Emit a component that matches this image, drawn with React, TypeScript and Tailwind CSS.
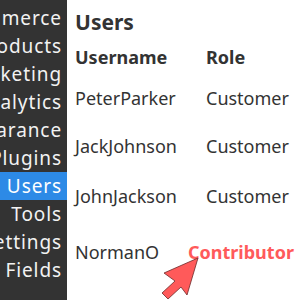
const navItems = [
  'Commerce',
  'Products',
  'Marketing',
  'Analytics',
  'Appearance',
  'Plugins',
  'Users',
  'Tools',
  'Settings',
  'Custom Fields',
];

// spacing above each row, the last one is a bit taller in the shot
const users = [
  { name: 'PeterParker', role: 'Customer', gap: 'mt-[13px]' },
  { name: 'JackJohnson', role: 'Customer', gap: 'mt-[20px]' },
  { name: 'JohnJackson', role: 'Customer', gap: 'mt-[22px]' },
  { name: 'NormanO', role: 'Contributor', gap: 'mt-[28px]' },
];

function Arrow() {
  // drawn in page coordinates, offset by (155, 250)
  return (
    <svg className="absolute left-[155px] top-[250px]" width="50" height="50" viewBox="155 250 50 50">
      <path
        d="M198 258 L187 295 L181 287 L168 299 L162 293 L175 281 L164 273 Z"
        fill="#ff5a5a"
        stroke="#6b2a2a"
        strokeWidth="0.8"
        strokeLinejoin="round"
      />
    </svg>
  );
}

export default function App() {
  return (
    <div
      className="relative flex h-[300px] w-[300px] overflow-hidden bg-white"
      style={{ fontFamily: '"Noto Sans", sans-serif' }}
    >
      <div className="flex w-[67px] shrink-0 flex-col bg-[#333333] pt-[4px] text-[19px] tracking-[0.9px] text-[#f2f2f2]">
        {navItems.map((item) => (
          <div
            key={item}
            className={`flex h-[28px] items-center justify-end whitespace-nowrap pr-[5px] leading-none ${
              item === 'Users' ? 'bg-[#2d8ae6] text-white' : ''
            }`}
          >
            {item}
          </div>
        ))}
      </div>

      <div className="flex-1 pl-[8px] pt-[8px] text-[#333333]">
        <h1 className="text-[21px] font-bold leading-[28px]">Users</h1>
        <div className="mt-[7px] grid grid-cols-[131px_1fr] text-[18px]">
          <div className="font-bold leading-[28px]">Username</div>
          <div className="font-bold leading-[28px]">Role</div>
          {users.map((u) => (
            <div key={u.name} className="contents">
              <div className={`${u.gap} leading-[28px]`}>{u.name}</div>
              <div className={`${u.gap} leading-[28px]`}>
                {u.role === 'Contributor' ? (
                  <span className="ml-[-18px] font-bold text-[#ff5a5a]">{u.role}</span>
                ) : (
                  u.role
                )}
              </div>
            </div>
          ))}
        </div>
      </div>

      <Arrow />
    </div>
  );
}
